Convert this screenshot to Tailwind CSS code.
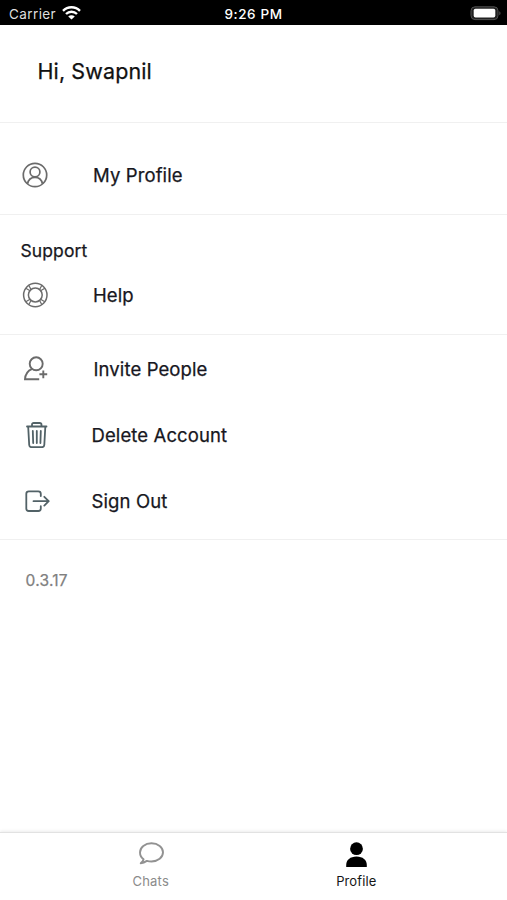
<!DOCTYPE html>
<html lang="en">
<head>
<meta charset="utf-8">
<title>Profile</title>
<script src="https://cdn.jsdelivr.net/npm/@tailwindcss/browser@4"></script>
</head>
<body class="bg-white">
<div class="flex h-[900px] w-[507px] flex-col overflow-hidden bg-white font-['Inter',sans-serif] text-[18.5px] leading-6 font-normal tracking-[0.11px] text-[#171721]">
  <header class="grid h-[25px] shrink-0 grid-cols-3 items-center bg-black pt-0.5 text-[13.5px] leading-5 text-white">
    <div class="flex items-center gap-1.5 pl-[9px]">
      <span class="text-[#dedede] tracking-[0.4px]">Carrier</span>
      <svg class="mb-0.5 h-[14px] w-[19px]" viewBox="0 0 19 14" fill="none" stroke="#fff" stroke-width="2.4"><path d="M1 4.8C5.7.1 13.3.1 18 4.8M4 8c3.1-3 7.9-3 11 0"/><path d="M6.2 10.4c1.9-1.7 4.7-1.7 6.6 0l-3.3 3.2z" fill="#fff" stroke="none"/></svg>
    </div>
    <span class="text-center font-medium tracking-[0.6px]">9:26 PM</span>
    <svg class="mr-[5px] h-[15px] w-[32px] justify-self-end" viewBox="0 0 32 15"><rect x="1" y=".8" width="27" height="12.8" rx="4" fill="#222" stroke="#505050"/><rect x="3.7" y="2.8" width="21.6" height="8.8" rx="1.8" fill="#fff"/><path d="M29.3 5.2c1.6.5 1.6 3.5 0 4z" fill="#555"/></svg>
  </header>
  <main class="flex-1 [-webkit-text-stroke:0.25px]">
    <section class="h-[98px] border-b border-[#f0f0f0] pt-[34px] pl-[37.5px] text-[21.5px] text-[#111]">Hi, Swapnil</section>
    <section class="flex h-[92px] items-center border-b border-[#f0f0f0] pt-[13px] pl-[22px]">
      <svg class="mr-[45px] size-[26px]" viewBox="0 0 26 26" fill="none" stroke="#6b6b6b" stroke-width="1.7"><circle cx="13" cy="13" r="11.7"/><circle cx="13" cy="10" r="4.9"/><path d="M5.5 21.8c.8-4 3.8-6.5 7.5-6.5s6.7 2.5 7.5 6.5"/></svg>
      <span>My Profile</span>
    </section>
    <section class="h-[120px] border-b border-[#f0f0f0] pt-6">
      <h2 class="pl-[20.5px] text-[17.5px]">Support</h2>
      <div class="mt-[19px] flex items-center pl-[22px]">
        <svg class="mr-[45px] size-[26px]" viewBox="0 0 26 26" fill="none" stroke="#6b6b6b" stroke-width="1.5"><circle cx="13.3" cy="13" r="11.7"/><circle cx="13.3" cy="13" r="6.9"/><path d="M3.8 6.2l4.2 2.5M6.7 3.3l2.4 4.3M19.9 3.3l-2.4 4.3M22.8 6.2l-4.2 2.5M22.8 19.8l-4.2-2.5M19.9 22.7l-2.4-4.3M6.7 22.7l2.4-4.3M3.8 19.8l4.2-2.5" stroke-width="1.2"/></svg>
        <span>Help</span>
      </div>
    </section>
    <section class="flex h-[205px] flex-col border-b border-[#f0f0f0]">
      <div class="flex h-[67px] items-center pl-[22px]">
        <svg class="mr-[45.5px] size-[26px]" viewBox="0 0 26 26" fill="none" stroke="#6b6b6b" stroke-width="1.9"><circle cx="14.2" cy="7.8" r="6.5"/><path d="M10.2 12.8C5.8 14.6 3.2 18.5 3 23.3h14.2M17.4 18.3h7.8M21.3 14.5v7.7"/></svg>
        <span>Invite People</span>
      </div>
      <div class="flex h-[66px] items-center pl-[24px]">
        <svg class="mr-[41.5px] size-[26px]" viewBox="0 0 26 26" fill="none" stroke="#526267" stroke-width="1.8" stroke-linecap="round"><path d="M3 4.5h19.5M8 4V2.7C8 1.6 8.7 1 9.7 1h6c1 0 1.8.6 1.8 1.7V4M4.2 5l1 18c.1 1.4 1 2.2 2.4 2.2h10.3c1.4 0 2.3-.8 2.4-2.2L21.3 5M8.8 9l.4 12M12.8 9v12M16.8 9l-.4 12"/></svg>
        <span>Delete Account</span>
      </div>
      <div class="flex h-[66px] items-center pl-[24px]">
        <svg class="mr-[41.5px] size-[26px]" viewBox="0 0 26 26" fill="none" stroke="#526267" stroke-width="1.8" stroke-linecap="round" stroke-linejoin="round"><path d="M16.8 8V5.8c0-1.6-.9-2.5-2.5-2.5H4.8c-1.6 0-2.5.9-2.5 2.5v14.7c0 1.6.9 2.5 2.5 2.5h9.5c1.6 0 2.5-.9 2.5-2.5v-2.3M9.5 13.2h15.2M20.3 8.8l4.4 4.4-4.4 4.4"/></svg>
        <span>Sign Out</span>
      </div>
    </section>
    <p class="pt-[29px] pl-[25.5px] text-[15.5px] text-[#808080] tracking-[0.25px]">0.3.17</p>
  </main>
  <nav class="flex h-[68px] shrink-0 border-t border-[#e2e2e2] px-[48px] text-[13px] leading-4 shadow-[0_-1px_3px_rgba(0,0,0,0.08)]">
    <div class="flex flex-1 flex-col items-center pt-2 text-[#8b8b8b]">
      <svg class="mb-1.5 h-[26px] w-[28px]" viewBox="0 0 28 26" fill="none" stroke="#929292" stroke-width="1.9" stroke-linejoin="round"><path d="M6.6 18.2C4.2 16.6 3 14.3 3 11.5 3 6.2 8 2.3 14.5 2.3S26 6.2 26 11.3s-5 9.2-11.5 9.2c-1.7 0-3.2-.2-4.6-.6-1.6 1-3.5 2-6.2 2.3 1.6-1.2 2.6-2.5 2.9-4z"/></svg>
      <span class="tracking-[0.2px]">Chats</span>
    </div>
    <div class="flex flex-1 flex-col items-center pt-2 text-[#151515]">
      <svg class="mb-1.5 h-[26px] w-[28px]" viewBox="0 0 28 26"><circle cx="14.5" cy="7.7" r="6.4"/><path d="M4.2 26v-2c0-5 4-8.5 10.3-8.5s10.3 3.5 10.3 8.5v2z"/></svg>
      <span class="tracking-[0.1px]">Profile</span>
    </div>
  </nav>
</div>
</body>
</html>
